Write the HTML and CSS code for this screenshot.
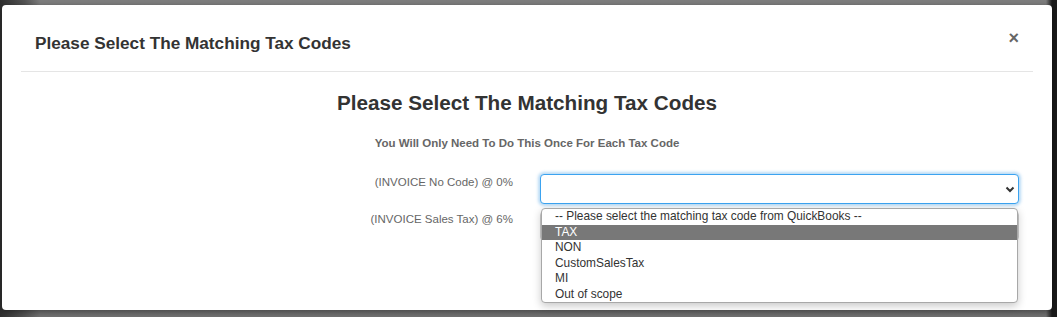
FILE: index.html
```html
<!DOCTYPE html>
<html lang="en">
<head>
  <meta charset="UTF-8">
  <title>Tax Code Mapping</title>
  <link rel="stylesheet" href="styles.css">
</head>
<body>
  <div class="backdrop">
    <div class="modal">
      <div class="modal-header">
        <h4 class="modal-title">Please Select The Matching Tax Codes</h4>
        <span class="close">&times;</span>
      </div>

      <div class="modal-body">
        <h3 class="heading">Please Select The Matching Tax Codes</h3>
        <p class="subtitle">You Will Only Need To Do This Once For Each Tax Code</p>

        <div class="form-row">
          <label class="control-label">(INVOICE No Code) @ 0%</label>
          <div class="select-wrap">
            <select class="form-control focused">
              <option></option>
            </select>
            <svg class="chevron" width="10" height="7" viewBox="0 0 10 7">
              <path d="M1.5 1.5 L5 5 L8.5 1.5" fill="none" stroke="#333" stroke-width="2"/>
            </svg>
            <!-- open dropdown list -->
            <ul class="dropdown">
              <li>-- Please select the matching tax code from QuickBooks --</li>
              <li class="active">TAX</li>
              <li>NON</li>
              <li>CustomSalesTax</li>
              <li>MI</li>
              <li>Out of scope</li>
            </ul>
          </div>
        </div>

        <div class="form-row">
          <label class="control-label">(INVOICE Sales Tax) @ 6%</label>
          <div class="select-wrap">
            <select class="form-control">
              <option></option>
            </select>
          </div>
        </div>
      </div>
    </div>
  </div>
</body>
</html>
```

FILE: styles.css
```css
body {
  margin: 0;
  font-family: "Liberation Sans", Arial, sans-serif;
  color: #333;
}

.backdrop {
  height: 317px;
  padding: 5px 5px 0 2px;
  box-sizing: border-box;
  background:
    linear-gradient(90deg, #2e2e2e 0, #555 25px, rgba(120,120,120,0) 40px),
    linear-gradient(90deg, rgba(0,0,0,0) 1046px, #1a1a1a 1052px),
    linear-gradient(180deg, #7d7d7d 0, #7a7a7a 50%, #727272 100%);
}

.modal {
  height: 305px;
  background: #fff;
  border-radius: 4px;
  box-shadow: 0 2px 6px rgba(0, 0, 0, 0.4);
  position: relative;
}

.modal-header {
  display: flex;
  justify-content: space-between;
  margin: 0 19px;
  padding: 26px 14px 16px 14px;
  border-bottom: 1px solid #e5e5e5;
}

.modal-title {
  margin: 0;
  font-size: 17.2px;
  line-height: 24px;
  font-weight: bold;
  color: #333;
}

.close {
  align-self: flex-start;
  margin-top: -2px;
  font-size: 18px;
  line-height: 18px;
  font-weight: bold;
  color: #666;
}

.modal-body {
  text-align: center;
}

.heading {
  margin: 19px 0 0;
  font-size: 20.7px;
  line-height: 24px;
  font-weight: bold;
  color: #333;
}

.subtitle {
  margin: 20px 0 23px;
  font-size: 11.5px;
  line-height: 16px;
  font-weight: bold;
  color: #666;
}

.form-row {
  display: grid;
  grid-template-columns: 1fr 479px;
  column-gap: 27px;
  margin: 0 33px 7px 0;
}

.control-label {
  text-align: right;
  font-size: 11.5px;
  line-height: 16px;
  color: #666;
}

.select-wrap {
  position: relative;
}

.form-control {
  display: block;
  width: 100%;
  height: 30px;
  margin: 0;
  border: 1px solid #ccc;
  border-radius: 4px;
  background: #fff;
  appearance: none;
  -webkit-appearance: none;
  font-family: inherit;
  font-size: 11.5px;
}

.form-control.focused {
  border-color: #3ba3f0;
  box-shadow: 0 0 3px 2px rgba(102, 175, 233, 0.45);
  outline: none;
}

.chevron {
  position: absolute;
  right: 4px;
  top: 12px;
}

.dropdown {
  position: absolute;
  top: 34px;
  left: 1px;
  right: 1px;
  z-index: 2;
  margin: 0;
  padding: 0;
  list-style: none;
  text-align: left;
  background: #fff;
  border: 1px solid #a8a8a8;
  border-radius: 4px;
  box-shadow: 0 3px 8px rgba(0, 0, 0, 0.22);
  overflow: hidden;
}

.dropdown li {
  height: 15.5px;
  line-height: 15.5px;
  padding-left: 13px;
  font-size: 11.9px;
  color: #333;
}

.dropdown li.active {
  background: #787878;
  color: #fff;
}
```
